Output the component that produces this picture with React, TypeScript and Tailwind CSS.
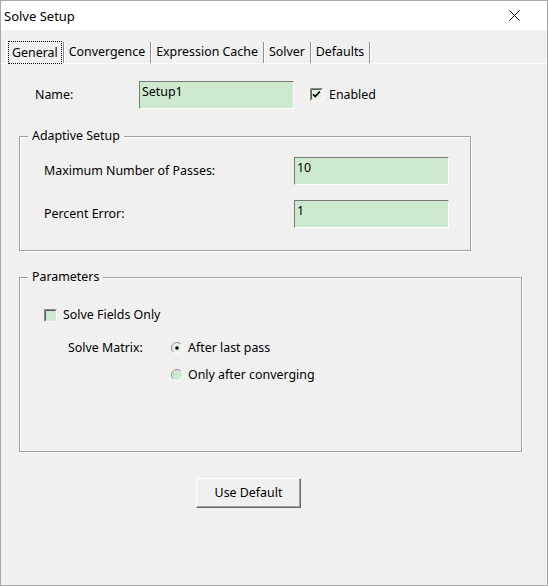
import clsx from "clsx"

const tabs = ["General", "Convergence", "Expression Cache", "Solver", "Defaults"]

const Field = ({ value, className }: { value: string; className?: string }) => (
  <div
    className={clsx(
      "h-[28px] border-t border-l border-b border-r border-t-[#7a7a7a] border-l-[#7a7a7a] border-b-white border-r-white bg-[#cdeacf] px-[2px] pt-[1px] leading-[18px] text-black",
      className
    )}
  >
    {value}
  </div>
)

const CheckBox = ({ checked }: { checked?: boolean }) => (
  <svg width="13" height="13" viewBox="0 0 13 13" className="shrink-0">
    <rect x="0" y="0" width="13" height="13" fill={checked ? "#e4f2e4" : "#cdeacf"} />
    <path d="M0.5 12.5 H12.5 V0.5" stroke="#ffffff" fill="none" />
    <path d="M0.5 12.5 V0.5 H12.5" stroke="#8a8a8a" fill="none" />
    <path d="M1.5 11.5 V1.5 H11.5" stroke="#5a5a5a" fill="none" />
    {checked && <path d="M3 6.2 L5.2 8.6 L9.8 3.6" stroke="#000" strokeWidth="1.7" fill="none" />}
  </svg>
)

const Radio = ({ checked }: { checked?: boolean }) => (
  <svg width="12" height="12" viewBox="0 0 12 12" className="shrink-0">
    <circle cx="6" cy="6" r="5.5" fill={checked ? "#e8efe8" : "#cdeacf"} stroke="#ffffff" />
    <path d="M2.1 9.9 A5.5 5.5 0 0 1 9.9 2.1" stroke="#8a8a8a" fill="none" />
    {checked && <circle cx="6" cy="6" r="1.8" fill="#000" />}
  </svg>
)

const App = () => {
  return (
    <div className="flex h-[586px] w-[548px] flex-col border border-[#a9a9a9] bg-[#f0f0f0] font-['Noto_Sans',sans-serif] text-[12.4px] text-black">
      <div className="flex h-[29px] shrink-0 items-center justify-between bg-white pl-[3px] pr-[27px]">
        <span className="text-[13px] leading-[16px]">Solve Setup</span>
        <svg width="11" height="11" viewBox="0 0 11 11">
          <path d="M0.5 0.5 L10.5 10.5 M10.5 0.5 L0.5 10.5" stroke="#111" strokeWidth="1" />
        </svg>
      </div>

      <div className="flex flex-1 flex-col pt-[10px]">
        <div className="flex h-[24px] border-b border-white pl-[5px]">
          {tabs.map((t, i) => (
            <div
              key={t}
              className={clsx(
                "mt-[2px] flex items-end border-r border-r-[#8f8f8f] shadow-[1px_0_0_#fff]",
                i === 0 ? "border-l border-l-white pl-[2px] pr-[2px]" : "px-[5px] pb-[1px]"
              )}
            >
              {i === 0 ? (
                <span className="flex h-[21px] items-center px-[3px] pt-[2px] outline outline-1 outline-dotted outline-black">
                  {t}
                </span>
              ) : (
                t
              )}
            </div>
          ))}
        </div>

        <div className="mt-[17px] flex items-center pl-[34px]">
          <span className="w-[104px]">Name:</span>
          <Field value="Setup1" className="w-[155px]" />
          <div className="ml-[16px] flex items-center gap-[6px]">
            <CheckBox checked />
            <span>Enabled</span>
          </div>
        </div>

        <fieldset className="ml-[18px] mt-[19px] w-[452px] border border-[#a0a0a0] p-0 shadow-[inset_1px_1px_0_#fff,1px_1px_0_#fff]">
          <legend className="ml-[8px] bg-[#f0f0f0] px-[4px] leading-[16px]">Adaptive Setup</legend>
          <div className="mt-[13px] flex items-center pl-[24px]">
            <span className="w-[250px]">Maximum Number of Passes:</span>
            <Field value="10" className="w-[155px]" />
          </div>
          <div className="mb-[22px] mt-[15px] flex items-center pl-[24px]">
            <span className="w-[250px]">Percent Error:</span>
            <Field value="1" className="w-[155px]" />
          </div>
        </fieldset>

        <fieldset className="ml-[18px] mt-[18px] h-[183px] w-[503px] border border-[#a0a0a0] p-0 shadow-[inset_1px_1px_0_#fff,1px_1px_0_#fff]">
          <legend className="ml-[8px] bg-[#f0f0f0] px-[4px] leading-[16px]">Parameters</legend>
          <div className="mt-[22px] flex h-[16px] items-center gap-[6px] pl-[24px]">
            <CheckBox />
            <span>Solve Fields Only</span>
          </div>
          <div className="mt-[17px] flex h-[16px] items-center pl-[48px]">
            <span className="w-[103px]">Solve Matrix:</span>
            <Radio checked />
            <span className="ml-[5px]">After last pass</span>
          </div>
          <div className="mt-[11px] flex h-[16px] items-center pl-[151px]">
            <Radio />
            <span className="ml-[5px]">Only after converging</span>
          </div>
        </fieldset>

        <button className="ml-[195px] mt-[26px] h-[30px] w-[105px] border-t border-l border-b border-r border-t-white border-l-white border-b-[#696969] border-r-[#696969] bg-[#f0f0f0] shadow-[inset_-1px_-1px_0_#a0a0a0]">
          Use Default
        </button>
      </div>
    </div>
  )
}

export default App
